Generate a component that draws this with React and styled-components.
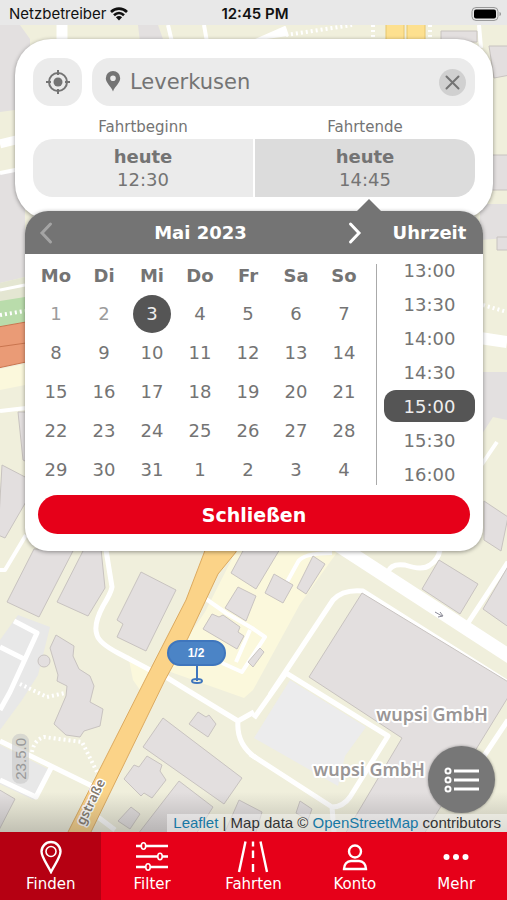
import React from "react";
import styled, { createGlobalStyle, css } from "styled-components";

const GlobalStyle = createGlobalStyle`
    *, *::before, *::after {
        box-sizing: border-box;
    }

    body {
        margin: 0;
        font-family: "DejaVu Sans", Verdana, sans-serif;
        color: #747474;
    }

    button, input {
        font-family: inherit;
        color: inherit;
        border: none;
        padding: 0;
        margin: 0;
        background: none;
    }

    button {
        cursor: pointer;
    }
`;

const Screen = styled.div`
    min-height: 100vh;
    display: flex;
    flex-direction: column;
`;

const MapArea = styled.main`
    position: relative;
    flex: 1;
    overflow: hidden;
    isolation: isolate;
    padding-bottom: 120px;
`;

const MapSvg = styled.svg`
    position: absolute;
    top: 0;
    left: 0;
    width: 100%;
    height: 100%;
    z-index: -1;
`;

const StatusBar = styled.header`
    display: grid;
    grid-template-columns: 1fr auto 1fr;
    align-items: center;
    height: 25px;
    padding: 2px 6px 0 9px;
    background: #e8e8e8;
    color: #111;
    font-family: Inter, sans-serif;
    font-size: 15px;
`;

const Carrier = styled.span`
    display: flex;
    align-items: center;
    gap: 4px;
`;

const Clock = styled.span`
    font-weight: 600;
`;

const Battery = styled.svg`
    justify-self: end;
`;

const SearchCard = styled.section`
    margin: 14px 14px 0 15px;
    padding: 19px 18px 23px;
    border-radius: 36px;
    background: #fff;
    box-shadow: 0 1px 4px rgba(0, 0, 0, 0.4);
`;

const SearchRow = styled.div`
    display: flex;
    gap: 10px;
    height: 48px;
`;

const LocateButton = styled.button`
    display: flex;
    align-items: center;
    justify-content: center;
    width: 49px;
    border-radius: 18px;
    background: #ebebeb;
`;

const SearchBox = styled.div`
    flex: 1;
    min-width: 0;
    display: flex;
    align-items: center;
    gap: 9px;
    padding: 0 9px 0 13px;
    border-radius: 18px;
    background: #ebebeb;
`;

const SearchInput = styled.input`
    flex: 1;
    min-width: 0;
    font-size: 21px;
    outline: none;
`;

const ClearButton = styled.button`
    display: flex;
    align-items: center;
    justify-content: center;
    width: 27px;
    height: 27px;
    border-radius: 50%;
    background: #d0d0d0;
`;

const Trip = styled.div`
    display: grid;
    grid-template-columns: 1fr 1fr;
    column-gap: 2px;
    text-align: center;
`;

const TripLabel = styled.label`
    padding-top: 10px;
    font-size: 15px;
    line-height: 23px;
`;

const TripButton = styled.button`
    height: 58px;
    font-size: 18px;
    line-height: 23px;
    border-radius: ${(props) => (props.$active ? "0 20px 20px 0" : "20px 0 0 20px")};
    background: ${(props) => (props.$active ? "#dcdcdc" : "#ebebeb")};

    strong {
        display: block;
    }
`;

const Picker = styled.section`
    position: relative;
    margin: -9px 24px 0 25px;
    padding-bottom: 17px;
    border-radius: 23px;
    background: #fff;
    box-shadow: 0 1px 4px rgba(0, 0, 0, 0.4);

    &::before {
        content: "";
        position: absolute;
        top: -12px;
        left: 75%;
        margin-left: -12px;
        border: 12px solid transparent;
        border-top: none;
        border-bottom-color: #747474;
    }
`;

const PickerHeader = styled.div`
    display: grid;
    grid-template-columns: 1fr 107px;
    align-items: center;
    height: 43px;
    border-radius: 23px 23px 0 0;
    background: #747474;
    color: #fff;
    font-size: 18px;
    font-weight: bold;
    text-align: center;
`;

const MonthNav = styled.div`
    display: flex;
    align-items: center;
    justify-content: space-between;
    padding: 0 14px;
`;

const NavButton = styled.button`
    display: flex;
    opacity: ${(props) => (props.disabled ? 0.35 : 1)};
`;

const PickerBody = styled.div`
    display: grid;
    grid-template-columns: 1fr 107px;
    align-items: start;
`;

const Calendar = styled.table`
    width: calc(100% - 15px);
    margin: 2px 8px 0 7px;
    table-layout: fixed;
    border-collapse: collapse;
    font-size: 18px;

    th, td {
        height: 39px;
        padding: 0;
        text-align: center;
    }

    th {
        height: 38px;
    }
`;

const Day = styled.button`
    display: block;
    width: 38px;
    height: 38px;
    margin: 0 auto;
    border-radius: 50%;
    font-size: 18px;
    color: ${(props) => (props.disabled ? "#9c9c9c" : "#747474")};

    ${(props) => props.$selected && css`
        background: #555;
        color: #eee;
    `}
`;

const Times = styled.div`
    display: flex;
    flex-direction: column;
    gap: 2px;
    padding: 0 8px;
    background: linear-gradient(#aaa, #aaa) 0 10px / 1px 221px no-repeat;
`;

const Time = styled.button`
    height: 32px;
    border-radius: 12px;
    font-size: 18px;
    color: ${(props) => (props.$selected ? "#eee" : "#747474")};
    background: ${(props) => (props.$selected ? "#555" : "none")};
`;

const CloseButton = styled.button`
    display: block;
    width: calc(100% - 26px);
    height: 39px;
    margin: 5px 13px 0;
    border-radius: 20px;
    background: #e60019;
    color: #fff;
    font-size: 19px;
    font-weight: bold;
`;

const ListButton = styled.button`
    position: absolute;
    right: 12px;
    bottom: 19px;
    display: flex;
    align-items: center;
    justify-content: center;
    width: 67px;
    height: 67px;
    border-radius: 50%;
    background: #777;
    box-shadow: 0 0 3px rgba(0, 0, 0, 0.4);
`;

const Version = styled.span`
    position: absolute;
    left: 12px;
    bottom: 48px;
    padding: 4px 0;
    border-radius: 8px;
    background: rgba(200, 200, 200, 0.6);
    color: #999;
    font-family: "Liberation Sans", Arial, sans-serif;
    font-size: 15px;
    line-height: 17px;
    writing-mode: vertical-rl;
    transform: rotate(180deg);
`;

const Attribution = styled.div`
    position: absolute;
    right: 0;
    bottom: 0;
    padding: 0 6px;
    background: rgba(255, 255, 255, 0.45);
    color: #333;
    font-family: "Liberation Sans", Arial, sans-serif;
    font-size: 15px;
    line-height: 18px;
    white-space: nowrap;

    a {
        color: #1878a5;
        text-decoration: none;
    }
`;

const TabBar = styled.nav`
    display: grid;
    grid-template-columns: repeat(5, 1fr);
    height: 68px;
    background: #e60019;
`;

const Tab = styled.button`
    display: flex;
    flex-direction: column;
    align-items: center;
    padding-top: 7px;
    background: ${(props) => (props.$active ? "#b50012" : "none")};
    color: #fff;
    font-size: 15px;
    line-height: 20px;
`;

const weekDays = ["Mo", "Di", "Mi", "Do", "Fr", "Sa", "So"];

const weeks = [
    [1, 2, 3, 4, 5, 6, 7],
    [8, 9, 10, 11, 12, 13, 14],
    [15, 16, 17, 18, 19, 20, 21],
    [22, 23, 24, 25, 26, 27, 28],
    [29, 30, 31, 1, 2, 3, 4],
];

const times = ["13:00", "13:30", "14:00", "14:30", "15:00", "15:30", "16:00"];

const tabs = [
    {
        name: "Finden",
        icon: (
            <>
                <path d="M18 33C14 25 8.500 18 8.500 12.500a9.500 9.500 0 0 1 19 0C27.500 18 22 25 18 33z" />
                <circle cx="18" cy="12.500" r="5" strokeWidth="1.600" />
            </>
        ),
    },
    {
        name: "Filter",
        icon: (
            <>
                <path d="M2 7h5.500M11.500 7H34M2 17.500h22M28 17.500h6M2 28h10M16 28h18" />
                <ellipse cx="9.500" cy="7" rx="2.200" ry="3.200" strokeWidth="1.600" />
                <ellipse cx="26" cy="17.500" rx="2.200" ry="3.200" strokeWidth="1.600" />
                <ellipse cx="14" cy="28" rx="2.200" ry="3.200" strokeWidth="1.600" />
            </>
        ),
    },
    {
        name: "Fahrten",
        icon: (
            <path d="M10.500 2.500L4 33M25.500 2.500L32 33M18 2.500v5M18 11.500v7.500M18 25v8" />
        ),
    },
    {
        name: "Konto",
        icon: (
            <>
                <circle cx="18" cy="12.500" r="6" />
                <path d="M7 30c0-4.500 3-8 7-8h8c4 0 7 3.500 7 8z" />
            </>
        ),
    },
    {
        name: "Mehr",
        icon: (
            <g fill="#fff" stroke="none">
                <circle cx="8.500" cy="18" r="3" />
                <circle cx="18" cy="18" r="3" />
                <circle cx="27.500" cy="18" r="3" />
            </g>
        ),
    },
];

const CityMap = () => (
    <MapSvg viewBox="0 0 507 832" preserveAspectRatio="xMidYMid slice" aria-hidden="true">
        <defs>
            <linearGradient id="shade" x1="0" y1="0" x2="0" y2="1">
                <stop offset="0" stopColor="#555" stopOpacity="0" />
                <stop offset="1" stopColor="#555" stopOpacity="0.3" />
            </linearGradient>
        </defs>
        <rect width="507" height="832" fill="#f0efdc" />

        {/* ground */}
        <path fill="#e3e0e0" d="M0 25H20L30 39V108L0 112zM0 174L25 168V277L0 283zM138 25H158L164 42H140zM480 204H507V238L480 240zM480 372H507V420L493 417L480 437z" />
        <path fill="#e4e6d2" d="M0 283L25 277V299L0 303z" />
        <path fill="#b9dcab" d="M0 301L25 297V322L0 327z" />
        <path fill="#ea9b76" stroke="#c9754f" d="M-2 327L26 322V362L-2 368zM-2 347L26 343" />
        <path fill="#fbf8dc" d="M0 369L25 364V385L0 390zM236 551H338L300 604L253 690L244 698L165 670L205 612zM128 655L152 672L140 690L133 680z" />
        <path fill="#e8e8e8" d="M18 615L50 627L38 675L22 700L0 730V640zM0 745L50 770L34 800L0 784z" />
        <path fill="#ececed" d="M290 680L366 727L345 756L338 786L254 738z" />

        {/* roads */}
        <g fill="none" stroke="#fff" strokeWidth="5" strokeLinejoin="round">
            <path d="M62 25V42" strokeWidth="11" />
            <path d="M0 144L20 139" strokeWidth="9" />
            <path d="M0 173L20 169M168 25L172 42M204 25L207 42M479 25L481 48M0 411L26 408M26 535L5 570H0M480 467L497 442" strokeWidth="4" />
            <path d="M253 41L285 27L288 36" fill="#fff" strokeWidth="2" />
            <path d="M480 338L507 342" strokeWidth="12" />
            <path d="M0 290L25 285" strokeWidth="3" />
            <path d="M106 550L112 587Q111 593 103 606Q93 625 97 635Q99 643 118 653L152 671M166 677L187 690L238 721L254 712M238 721Q236 744 256 758" />
            <path d="M14 621L37 633L10 692L0 710M0 647L24 659M0 741L92 786M51 768L36 797L0 780M94 814L115 830" />
            <path d="M338 545L512 658" strokeWidth="14" />
            <path d="M270 695L333 600Q343 589 363 591L510 684M286 673L388 736L350 797Q343 807 332 807L250 754M286 673L254 718M332 807L334 832" />
            <path d="M388 572Q391 563 405 565Q423 571 430 565Q438 560 440 550M466 626L508 562M480 762L508 720" />
            <path d="M287 582L298 562Q303 553 332 553M206 599L226 613L252 628L265 637L242 672L222 663M250 630L236 662" strokeWidth="4" />
        </g>
        <g fill="none" stroke="#fff" strokeWidth="4" strokeDasharray="2 3">
            <path d="M286 35L352 25M373 25V40M430 25V40M0 315L25 311M483 305L507 312" />
            <path d="M20 684L47 697L65 693M32 752Q34 740 44 737L82 742L97 772" />
        </g>

        {/* main road */}
        <path fill="#fbd388" stroke="#dcaa60" d="M209 540H238L236 552L218 574L188 638L165 680L90 834H67L145 680L186 600z" />
        <path fill="#fde08f" stroke="#e6c66e" d="M386 20H404V42H386zM407 20H425V42H407z" />

        {/* buildings */}
        <g fill="#e3dfdf" stroke="#c8c3c0" strokeLinejoin="round">
            <path d="M34 549L7 602L39 617L74 549zM84 549L57 602L88 616L105 588L101 549z" />
            <path d="M141 572L176 590L146 651L117 637L123 624L117 620z" />
            <path d="M56 635L74 646L73 656L79 669L90 676L94 686L90 702L103 709L100 726L84 731L80 737L66 735L54 724L66 696L67 686L57 681L58 675L50 648z" />
            <circle cx="44" cy="661" r="6" />
            <path d="M163 718L242 778L224 804L143 747z" />
            <path d="M198 712L206 717L209 715L216 724L208 737L189 724z" />
            <path d="M147 756L162 765L160 771L166 780L152 798L144 793L141 796L124 779L134 765L139 767z" />
            <path d="M179 781L213 807L196 834H138zM131 807L140 814L130 829L118 821zM-2 789L15 799L-2 832zM239 800L262 812L256 832H225z" />
            <path d="M362 593L309 677L402 738L345 834H424L510 694V683z" />
            <path d="M439 560L478 584L460 614L422 589zM510 563L483 609L510 628zM313 556L325 564L306 594L297 588zM274 574L293 585L283 603L265 593z" />
            <path d="M244 549H280L256 589L231 573zM238 587L256 596L246 621L225 608z" />
            <path d="M212 614L219 617L223 615L240 627L238 632L244 636L237 649L203 629zM260 648L264 652L253 667L248 662z" />
            <path d="M441 31H477V42H441zM489 46H510V75L494 78zM484 155H510V190H484zM497 237H510V250H497z" />
            <path d="M2 465L27 478V500L5 538L-2 535zM18 412H27V462L23 460zM484 501L508 517L501 551L484 540zM300 801L312 809L308 820L296 813z" />
        </g>

        {/* one-way arrow */}
        <path fill="none" stroke="#8a8a96" d="M435 612L442 616M440 612L443 616L438 617" />

        <g fontFamily="Noto Sans, sans-serif" fontWeight="600" stroke="#fff" strokeWidth="4" strokeLinejoin="round" paintOrder="stroke" fill="#9a9696">
            <text x="432" y="721" fontSize="18" textAnchor="middle">wupsi GmbH</text>
            <text x="369" y="776" fontSize="18" textAnchor="middle">wupsi GmbH</text>
            <text transform="translate(84 826) rotate(-64)" fontSize="13" strokeWidth="3" fill="#857a6c">gstraße</text>
        </g>

        {/* station pin */}
        <path fill="none" stroke="#3f76bd" strokeWidth="2" d="M197 664V681" />
        <ellipse cx="197" cy="681" rx="5" ry="2" fill="none" stroke="#3f76bd" strokeWidth="2" />
        <rect x="168" y="641" width="57" height="24" rx="12" fill="#4b84c6" stroke="#3f76bd" strokeWidth="2" />
        <text x="196" y="657" fontSize="12" fontWeight="bold" fontFamily="Liberation Sans, Arial, sans-serif" fill="#fff" textAnchor="middle">1/2</text>

        <rect y="792" width="507" height="40" fill="url(#shade)" />
    </MapSvg>
);

const Chevron = ({ d }) => (
    <svg width="14" height="24" viewBox="0 0 14 24" fill="none" stroke="#fff" strokeWidth="3" strokeLinecap="round">
        <path d={d} />
    </svg>
);

export default function App() {
    const [place, setPlace] = React.useState("Leverkusen");
    const [day, setDay] = React.useState("0-3");
    const [time, setTime] = React.useState("15:00");
    const [tab, setTab] = React.useState("Finden");

    return (
        <Screen>
            <GlobalStyle />
            <MapArea>
                <CityMap />
                <StatusBar>
                    <Carrier>
                        Netzbetreiber
                        <svg width="18" height="14" viewBox="0 0 18 14" fill="none" stroke="#111" strokeWidth="2.600">
                            <path d="M1 5C5.500 0.500 12.500 0.500 17 5M4 8.300C7 5.400 11 5.400 14 8.300" />
                            <path fill="#111" stroke="none" d="M9 13.500L5.900 10.300C7.700 8.700 10.300 8.700 12.100 10.300z" />
                        </svg>
                    </Carrier>
                    <Clock>12:45 PM</Clock>
                    <Battery width="30" height="14" viewBox="0 0 30 14">
                        <rect x="1" y="0.500" width="26" height="13" rx="4" fill="none" stroke="#999" />
                        <rect x="3" y="2.500" width="22" height="9" rx="2" fill="#000" />
                        <path d="M28.500 5v4c1-.400 1.500-1 1.500-2s-.500-1.600-1.500-2z" fill="#999" />
                    </Battery>
                </StatusBar>

                <SearchCard>
                    <SearchRow>
                        <LocateButton aria-label="Standort">
                            <svg width="26" height="26" viewBox="0 0 26 26" fill="none" stroke="#747474" strokeWidth="2">
                                <circle cx="13" cy="13" r="9" />
                                <circle cx="13" cy="13" r="4.500" fill="#747474" stroke="none" />
                                <path d="M13 1v5M13 20v5M1 13h5M20 13h5" />
                            </svg>
                        </LocateButton>
                        <SearchBox>
                            <svg width="16" height="22" viewBox="0 0 16 22">
                                <path fill="#747474" fillRule="evenodd" d="M8 20.500C6 15 0.800 12 0.800 7.200a7.200 7.200 0 0 1 14.400 0C15.200 12 10 15 8 20.500zM8 10a2.800 2.800 0 1 0 0-5.600 2.800 2.800 0 0 0 0 5.600z" />
                            </svg>
                            <SearchInput type="text" aria-label="Ort" value={place} onChange={(e) => setPlace(e.target.value)} />
                            <ClearButton aria-label="Löschen" onClick={() => setPlace("")}>
                                <svg width="15" height="15" viewBox="0 0 15 15" stroke="#747474" strokeWidth="2" strokeLinecap="round">
                                    <path d="M1.500 1.500l12 12M13.500 1.500l-12 12" />
                                </svg>
                            </ClearButton>
                        </SearchBox>
                    </SearchRow>
                    <Trip>
                        <TripLabel htmlFor="start">Fahrtbeginn</TripLabel>
                        <TripLabel htmlFor="end">Fahrtende</TripLabel>
                        <TripButton id="start"><strong>heute</strong>12:30</TripButton>
                        <TripButton id="end" $active><strong>heute</strong>14:45</TripButton>
                    </Trip>
                </SearchCard>

                <Picker>
                    <PickerHeader>
                        <MonthNav>
                            <NavButton disabled aria-label="Voriger Monat"><Chevron d="M11.500 3L3 12L11.500 21" /></NavButton>
                            <span>Mai 2023</span>
                            <NavButton aria-label="Nächster Monat"><Chevron d="M2.500 3L11 12L2.500 21" /></NavButton>
                        </MonthNav>
                        <span>Uhrzeit</span>
                    </PickerHeader>
                    <PickerBody>
                        <Calendar>
                            <thead>
                                <tr>{weekDays.map((name) => <th key={name}>{name}</th>)}</tr>
                            </thead>
                            <tbody>
                                {weeks.map((week, row) => (
                                    <tr key={row}>
                                        {week.map((date) => {
                                            const id = `${row}-${date}`;
                                            return (
                                                <td key={id}>
                                                    <Day disabled={row === 0 && date < 3} $selected={day === id} onClick={() => setDay(id)}>
                                                        {date}
                                                    </Day>
                                                </td>
                                            );
                                        })}
                                    </tr>
                                ))}
                            </tbody>
                        </Calendar>
                        <Times>
                            {times.map((value) => (
                                <Time key={value} $selected={time === value} onClick={() => setTime(value)}>{value}</Time>
                            ))}
                        </Times>
                    </PickerBody>
                    <CloseButton>Schließen</CloseButton>
                </Picker>

                <Version>23.5.0</Version>
                <ListButton aria-label="Liste">
                    <svg width="36" height="26" viewBox="0 0 36 26" fill="none" stroke="#fff" strokeWidth="3">
                        <path d="M10 4h25M10 13h25M10 22h25" />
                        <g strokeWidth="2">
                            <circle cx="4" cy="4" r="2.500" />
                            <circle cx="4" cy="13" r="2.500" />
                            <circle cx="4" cy="22" r="2.500" />
                        </g>
                    </svg>
                </ListButton>
                <Attribution>
                    <a href="https://leafletjs.com">Leaflet</a> | Map data © <a href="https://www.openstreetmap.org">OpenStreetMap</a> contributors
                </Attribution>
            </MapArea>

            <TabBar>
                {tabs.map(({ name, icon }) => (
                    <Tab key={name} $active={tab === name} onClick={() => setTab(name)}>
                        <svg width="36" height="35" viewBox="0 0 36 35" fill="none" stroke="#fff" strokeWidth="2.400">{icon}</svg>
                        {name}
                    </Tab>
                ))}
            </TabBar>
        </Screen>
    );
}
